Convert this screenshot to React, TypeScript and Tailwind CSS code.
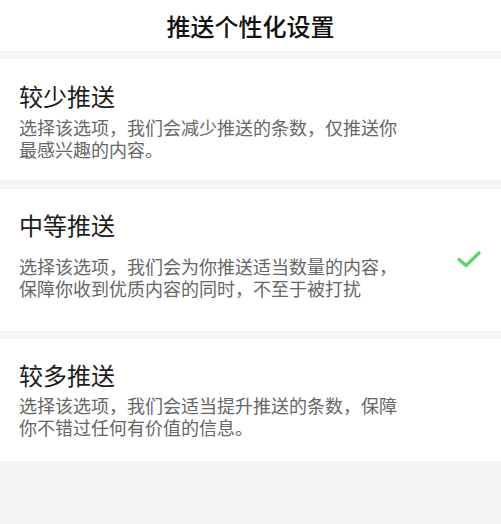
import React from "react";

const font = { fontFamily: '"Noto Sans CJK SC", "Noto Sans", sans-serif' };

function Check() {
  return (
    <svg width="26" height="20" viewBox="0 0 26 20" fill="none">
      <path d="M3 10.5 L10 16.5 L23 4" stroke="#5bd36a" strokeWidth="3.2" strokeLinecap="round" strokeLinejoin="round" />
    </svg>
  );
}

function Card({ title, text, checked, pad, gap }: { title: string; text: string; checked?: boolean; pad: string; gap: string }) {
  return (
    <div className={`bg-white flex items-center pl-[19px] pr-[19px] ${pad}`}>
      <div className="flex-1">
        <div className="text-[24px] leading-[30px] text-[#1c1c1c]">{title}</div>
        <p className={`${gap} w-[380px] text-[18px] leading-[22px] text-[#666666]`}>{text}</p>
      </div>
      {checked && (
        <div className="self-end mb-[30px]">
          <Check />
        </div>
      )}
    </div>
  );
}

export default function App() {
  return (
    <div className="w-[501px] h-[524px] bg-[#f4f4f4] flex flex-col" style={font}>
      <div className="h-[51px] bg-white flex items-center justify-center">
        <div className="text-[24px] font-medium text-[#111111] leading-none">推送个性化设置</div>
      </div>
      <div className="h-[8px]" />
      <Card title="较少推送" text="选择该选项，我们会减少推送的条数，仅推送你最感兴趣的内容。" pad="pt-[22px] pb-[20px]" gap="mt-[5px]" />
      <div className="h-[9px]" />
      <Card title="中等推送" text="选择该选项，我们会为你推送适当数量的内容，保障你收到优质内容的同时，不至于被打扰" checked pad="pt-[21px] pb-[32px]" gap="mt-[15px]" />
      <div className="h-[8px]" />
      <Card title="较多推送" text="选择该选项，我们会适当提升推送的条数，保障你不错过任何有价值的信息。" pad="pt-[21px] pb-[23px]" gap="mt-[4px]" />
    </div>
  );
}
